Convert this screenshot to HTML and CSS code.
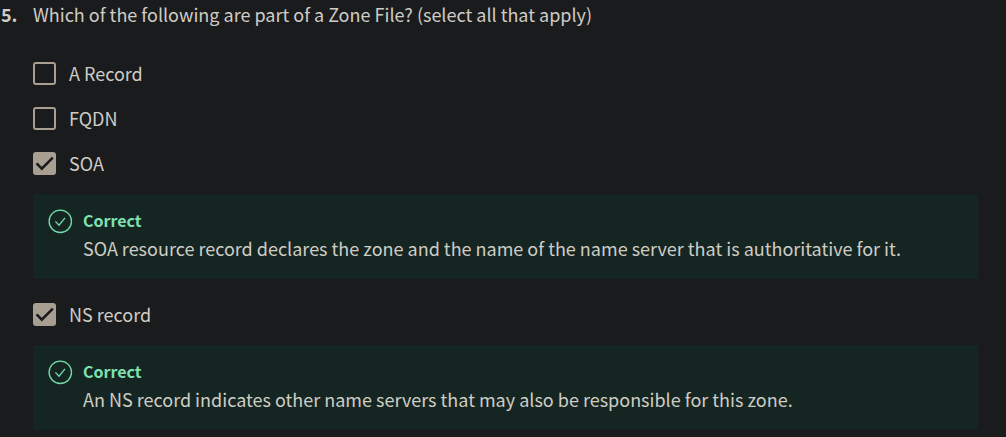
FILE: index.html
```html
<!DOCTYPE html>
<html lang="en">
<head>
<meta charset="utf-8">
<meta name="viewport" content="width=device-width, initial-scale=1">
<title>Quiz question 5</title>
<link rel="stylesheet" href="styles.css">
</head>
<body>
<main class="question">
  <span class="number">5.</span>
  <fieldset class="body">
    <legend class="prompt">Which of the following are part of a Zone File? (select all that apply)</legend>
    <div class="options">
      <label class="option"><input class="box" type="checkbox"><span class="name">A Record</span></label>
      <label class="option"><input class="box" type="checkbox"><span class="name">FQDN</span></label>
      <label class="option"><input class="box" type="checkbox" checked><span class="name">SOA</span></label>
      <div class="feedback">
        <svg class="status" viewBox="0 0 24 24" aria-hidden="true"><circle cx="12.3" cy="12.3" r="11.2"/><path d="M7.4 12.4l3.6 3.8 6-7.4"/></svg>
        <div>
          <strong class="verdict">Correct</strong>
          <p class="detail">SOA resource record declares the zone and the name of the name server that is authoritative for it.</p>
        </div>
      </div>
      <label class="option"><input class="box" type="checkbox" checked><span class="name">NS record</span></label>
      <div class="feedback">
        <svg class="status" viewBox="0 0 24 24" aria-hidden="true"><circle cx="12.3" cy="12.3" r="11.2"/><path d="M7.4 12.4l3.6 3.8 6-7.4"/></svg>
        <div>
          <strong class="verdict">Correct</strong>
          <p class="detail">An NS record indicates other name servers that may also be responsible for this zone.</p>
        </div>
      </div>
    </div>
  </fieldset>
</main>
</body>
</html>
```
FILE: styles.css
```css
* {
  box-sizing: border-box;
}

body {
  margin: 0;
  background: #1a1b1d;
  color: #cfccc5;
  font-family: "Noto Sans CJK SC", "Noto Sans", sans-serif;
  font-size: 18px;
  line-height: 28px;
}

.question {
  display: grid;
  grid-template-columns: 32px 1fr;
  padding: 0 28px 0 1px;
}

.number {
  font-weight: 700;
}

.body {
  min-width: 0;
  margin: 0;
  padding: 0;
  border: 0;
}

.prompt {
  padding: 0;
}

.options {
  display: flex;
  flex-direction: column;
  align-items: flex-start;
  padding-top: 23px;
}

.option {
  display: flex;
  align-items: center;
  gap: 13px;
  height: 45px;
}

.name {
  padding-bottom: 2px;
}

.box {
  appearance: none;
  flex: none;
  width: 23px;
  height: 23px;
  margin: 0;
  border: 2px solid #a89f92;
  border-radius: 3px;
}

.box:checked {
  border: 0;
  background: #a89f92 url("data:image/svg+xml,%3Csvg xmlns='http://www.w3.org/2000/svg' viewBox='0 0 23 23'%3E%3Cpath d='M3.6 11.4l5.2 5.2L19.8 5.6' fill='none' stroke='%231a1b1d' stroke-width='2.6'/%3E%3C/svg%3E") center / 23px 23px no-repeat;
}

.feedback {
  display: flex;
  gap: 11px;
  align-self: stretch;
  margin: 8px 0 13px;
  padding: 12px 15px 17px;
  background: #152622;
}

.status {
  flex: none;
  width: 24px;
  height: 24px;
  margin-top: 3px;
  overflow: visible;
  fill: none;
  stroke: #73dcaa;
  stroke-width: 1.3;
}

.verdict {
  display: block;
  color: #7fe0b2;
  font-size: 16px;
}

.detail {
  margin: 0;
}
```
